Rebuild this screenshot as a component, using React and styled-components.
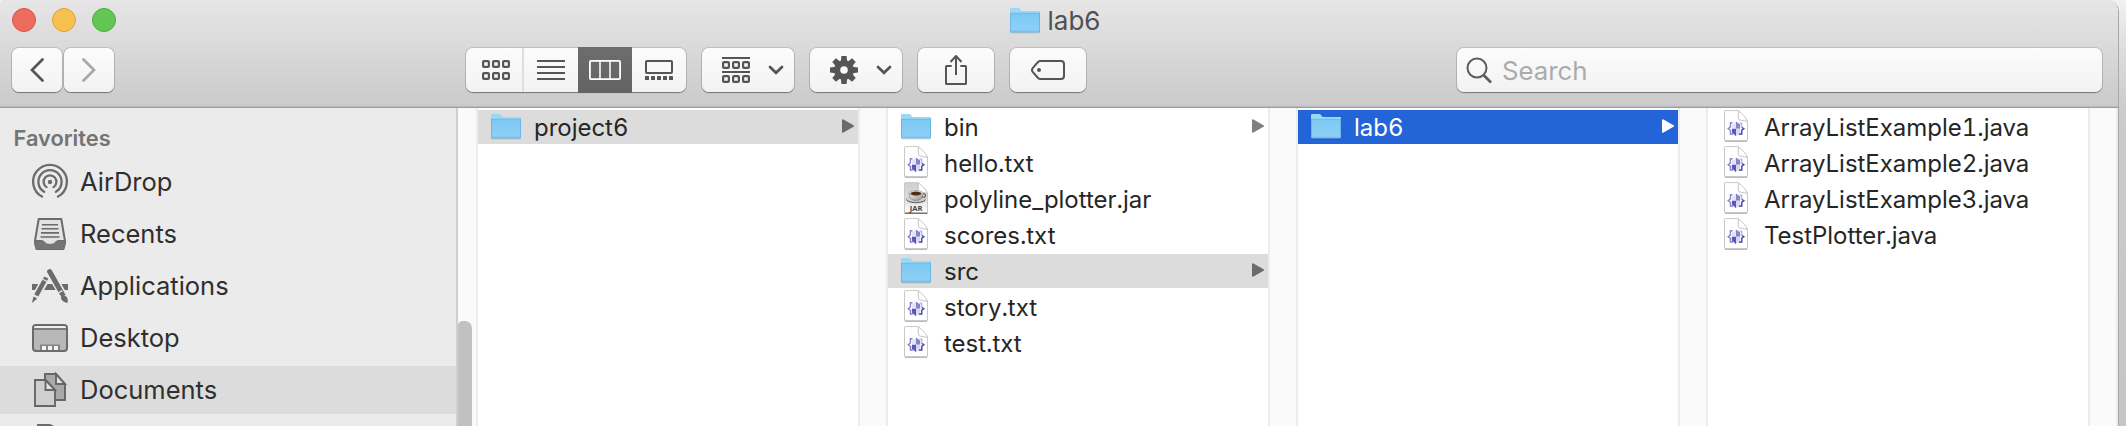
import React from "react";
import styled, { createGlobalStyle, css } from "styled-components";

const GlobalStyle = createGlobalStyle`
  * { box-sizing: border-box; }
  body {
    margin: 0;
    background: #fff;
    font-family: Inter, "Liberation Sans", sans-serif;
    overflow: hidden;
  }
  svg { display: block; flex: none; }
`;

const Backdrop = styled.div`
  width: 2126px;
  height: 426px;
  overflow: hidden;
  background: linear-gradient(#f2f2f2, #e0e0e0 40px, #cbcbcb 110px, #c6c6c6);
`;

const Window = styled.div`
  width: 2119px;
  height: 426px;
  display: flex;
  flex-direction: column;
  border-right: 1px solid #a9a9a9;
  border-radius: 4px 12px 0 0;
  overflow: hidden;
  background: #fff;
`;

const Header = styled.header`
  flex: none;
  height: 108px;
  background: linear-gradient(#e6e6e6, #cacaca);
  border-bottom: 1px solid #9c9c9c;
  box-shadow: inset 0 -1px 0 #bcbcbc;
`;

const TitleBar = styled.div`
  display: grid;
  grid-template-columns: 1fr auto 1fr;
  align-items: center;
  height: 40px;
  padding: 0 20px 0 12px;
`;

const Lights = styled.div`
  display: flex;
  gap: 16px;
`;

const Light = styled.span`
  width: 24px;
  height: 24px;
  border-radius: 50%;
  background: ${(p) => p.$fill};
  border: 1px solid ${(p) => p.$edge};
`;

const Title = styled.div`
  display: flex;
  align-items: center;
  gap: 8px;
  padding-top: 2px;
  color: #505050;
  font-size: 26px;
  line-height: 38px;
  height: 40px;
`;

const Toolbar = styled.div`
  display: flex;
  align-items: flex-start;
  padding: 8px 16px 0 12px;
`;

const raised = css`
  height: 44px;
  border-radius: 7px;
  background: linear-gradient(#fcfcfc, #f2f2f2);
  box-shadow: 0 0 0 1px rgba(0, 0, 0, 0.13), 0 1px 1px rgba(0, 0, 0, 0.35);
`;

const Button = styled.button`
  ${raised}
  display: flex;
  align-items: center;
  justify-content: ${(p) => (p.$menu ? "flex-start" : "center")};
  width: ${(p) => p.$w}px;
  margin: 0 0 0 ${(p) => p.$gap || 0}px;
  padding: 0 0 0 ${(p) => (p.$menu ? 20 : 0)}px;
  border: 0;
`;

const Segments = styled.div`
  ${raised}
  display: flex;
  width: 220px;
  margin-left: 352px;
`;

const Segment = styled.div`
  display: flex;
  align-items: center;
  justify-content: center;
  width: ${(p) => p.$w}px;
  padding-left: ${(p) => p.$pad || 0}px;
  border-right: ${(p) => (p.$divided ? "2px solid #dedede" : "0")};
  ${(p) =>
    p.$active &&
    css`
      height: 46px;
      margin-top: -1px;
      background: linear-gradient(#6d6d6d, #636363);
    `}
`;

const SearchField = styled.div`
  ${raised}
  display: flex;
  align-items: center;
  width: 645px;
  margin-left: auto;
  padding-left: 9px;
  gap: 9px;
  color: #ababab;
  font-size: 25.8px;
`;

const Body = styled.div`
  flex: 1;
  display: flex;
  min-height: 0;
`;

const Sidebar = styled.nav`
  flex: none;
  width: 458px;
  border-right: 2px solid #cfcfcf;
  background: #ebebeb;
  overflow: hidden;
`;

const SidebarHeading = styled.h2`
  margin: 0;
  height: 50px;
  padding: 12px 0 0 13.5px;
  color: #747474;
  font-size: 21.8px;
  font-weight: 600;
  line-height: 36px;
`;

const Place = styled.div`
  display: flex;
  align-items: center;
  gap: 10px;
  height: 48px;
  margin-bottom: 4px;
  padding-left: 30px;
  color: #2f2f2f;
  background: ${(p) => (p.$active ? "#dcdcdc" : "transparent")};
`;

const PlaceName = styled.span`
  font-size: 25.5px;
  line-height: 48px;
`;

const Gutter = styled.div`
  flex: none;
  width: ${(p) => p.$w || 26}px;
  background: #fafafa;
`;

const Thumb = styled.div`
  width: 14px;
  height: 130px;
  margin-top: 213px;
  border-radius: 5px 7px 0 0;
  background: #c1c1c1;
`;

const Column = styled.section`
  flex: none;
  width: 384px;
  padding-top: 2px;
  border: solid #ececec;
  border-width: 0 2px;
  background: #fff;
`;

const NextColumn = styled.div`
  width: 2px;
  background: #ececec;
`;

const rowColors = {
  plain: ["transparent", "#262626", "#808080"],
  path: ["#dcdcdc", "#262626", "#6b6b6b"],
  selected: ["#2464d9", "#fff", "#fff"],
};

const Row = styled.div`
  display: flex;
  align-items: center;
  height: 34px;
  margin-bottom: 2px;
  padding: 0 4px 0 13px;
  background: ${(p) => rowColors[p.$tone][0]};
  color: ${(p) => rowColors[p.$tone][1]};
`;

const FileName = styled.span`
  flex: 1;
  padding: 1px 0 0 13px;
  font-size: 24px;
  line-height: 34px;
  letter-spacing: -0.03px;
  font-variant-numeric: tabular-nums;
  white-space: nowrap;
`;

const INK = "#555";
const SIDE = "#6b6b6b";

const FolderIcon = () => (
  <svg width="30" height="34" viewBox="0 0 30 34">
    <defs>
      <linearGradient id="folder" x1="0" y1="0" x2="0" y2="1">
        <stop offset="0" stopColor="#7cc8f3" />
        <stop offset="1" stopColor="#90d2f8" />
      </linearGradient>
    </defs>
    <path d="M0.5 28.8h29" stroke="#000" strokeOpacity=".2" />
    <path d="M0 5.2Q0 4 1.2 4H8.5Q9.3 4 10 5L11.5 7H29Q30 7 30 8V27H0Z" fill="#9bd7f7" />
    <path d="M0 9.3H30V27Q30 28.3 28.8 28.3H1.2Q0 28.3 0 27Z" fill="url(#folder)" />
    <path d="M0 9.3H30" stroke="#6cb9e4" strokeWidth=".9" />
    <path d="M.4 9V27.9H29.6V9" fill="none" stroke="#60afdc" strokeWidth=".8" />
    <path d="M1 26.4H29" stroke="#7dc3ec" strokeWidth=".6" />
  </svg>
);

const Page = ({ fill }) => (
  <>
    <path d="M4 31.3H26" stroke="#aaa" strokeWidth="1" />
    <path d="M3.5 1.2Q3.5.6 4.2.6H17L26.5 11V30.5H3.5Z" fill={fill} stroke="#c9c9c9" strokeWidth="1" />
    <path d="M17.3.8V8.2Q17.3 9.8 19 10L26.4 11.4Q25 6.5 17.3.8Z" fill="#fff" stroke="#c0c0c0" strokeWidth=".9" />
  </>
);

const CodeIcon = () => (
  <svg width="30" height="34" viewBox="0 0 30 34">
    <Page fill="#fff" />
    <path d="M11.5 12.7H9.4V17L7.2 18.7 9.4 20.3V24H12" fill="none" stroke="#8583cc" strokeWidth="1.4" />
    <path d="M18.5 13.1H20.7V17L22.8 18.7 20.7 20.3V24H17.8" fill="none" stroke="#b9b7e3" strokeWidth="1.4" />
    <path d="M20.9 17.5L22.8 18.7 20.7 20.3V24H17.8" fill="none" stroke="#4f4cab" strokeWidth="1.4" />
    <path d="M15 11.5L19.2 14.5V18.7H15Z" fill="#8784cf" />
    <path d="M15 11.5V18.7H10.9V14.5Z" fill="#e4e4f5" />
    <path d="M10.9 18.7H15V26.3L10.9 22.5Z" fill="#5a57b6" />
    <path d="M15 18.7H19.2V22.6L15 26.3Z" fill="#d8d7f1" />
  </svg>
);

const JarIcon = () => (
  <svg width="30" height="34" viewBox="0 0 30 34">
    <defs>
      <linearGradient id="jarPage" x1="0" y1="0" x2="0" y2="1">
        <stop offset="0" stopColor="#cfcfcf" />
        <stop offset=".55" stopColor="#dedede" />
        <stop offset="1" stopColor="#fff" />
      </linearGradient>
      <linearGradient id="cup" x1="0" y1="0" x2="1" y2="1">
        <stop offset="0" stopColor="#fafafa" />
        <stop offset="1" stopColor="#8c8c8c" />
      </linearGradient>
    </defs>
    <Page fill="url(#jarPage)" />
    <path d="M3.5 31.3H26.5" stroke="#666" strokeWidth="1" />
    <ellipse cx="15" cy="17.6" rx="9.8" ry="3.6" fill="#6c6c6c" />
    <ellipse cx="15" cy="16.8" rx="9.5" ry="3.1" fill="#cfcfcf" />
    <ellipse cx="22.3" cy="13.4" rx="2.2" ry="1.8" fill="none" stroke="#6a6a6a" strokeWidth="1.3" />
    <path d="M8 11.3Q8.3 18.4 15 18.5T22 11.3Z" fill="url(#cup)" stroke="#777" strokeWidth=".6" />
    <ellipse cx="15" cy="11.2" rx="7" ry="2.6" fill="#f1f1f1" stroke="#888" strokeWidth=".6" />
    <ellipse cx="15" cy="11.5" rx="5.6" ry="1.9" fill="#4f2e16" />
    <text x="15.2" y="29" textAnchor="middle" fontFamily="Open Sans, sans-serif" fontSize="7.6" fontWeight="700" fill="#444">
      JAR
    </text>
  </svg>
);

const rowIcons = { folder: FolderIcon, code: CodeIcon, jar: JarIcon };

const Disclosure = ({ color }) => (
  <svg width="12" height="34" viewBox="0 0 12 34">
    <path d="M1 10.3L11 16 1 21.7Z" fill={color} stroke={color} strokeWidth="2" strokeLinejoin="round" />
  </svg>
);

const Arrow = ({ color, flip }) => (
  <svg width="14" height="26" viewBox="0 0 14 26" fill="none" stroke={color} strokeWidth="2.7" strokeLinecap="round">
    <path d={flip ? "M1.5 2.5L12 13 1.5 23.5" : "M12.5 2.5L2 13 12.5 23.5"} />
  </svg>
);

const MenuMark = styled.svg`
  margin-left: 18px;
`;

const Chevron = () => (
  <MenuMark width="16" height="10" viewBox="0 0 16 10" fill="none" stroke={INK} strokeWidth="2.7" strokeLinecap="round">
    <path d="M2 2L8 7.8 14 2" />
  </MenuMark>
);

const Tiles = ({ y }) => [0, 10, 20].map((x) => <rect key={x} x={x + 1.1} y={y + 1.1} width="5.8" height="5.8" rx="1" />);

const GridIcon = () => (
  <svg width="28" height="20" viewBox="0 0 28 20" fill="none" stroke={INK} strokeWidth="2.2">
    <Tiles y={0} />
    <Tiles y={12} />
  </svg>
);

const ListIcon = () => (
  <svg width="28" height="20" viewBox="0 0 28 20" stroke={INK} strokeWidth="2">
    <path d="M0 1H28M0 7H28M0 13H28M0 19H28" />
  </svg>
);

const ColumnsIcon = () => (
  <svg width="32" height="20" viewBox="0 0 32 20" fill="none" stroke="#fff" strokeWidth="1.8">
    <rect x=".9" y=".9" width="30.2" height="18.2" rx="1" />
    <path d="M11 1V19M21 1V19" strokeWidth="1.5" />
  </svg>
);

const GalleryIcon = () => (
  <svg width="28" height="20" viewBox="0 0 28 20">
    <rect x="1" y="1" width="26" height="12" rx="1" fill="none" stroke={INK} strokeWidth="2" />
    {[0, 6, 12, 18, 24].map((x) => (
      <rect key={x} x={x} y="16" width="4" height="4" rx=".6" fill={INK} />
    ))}
  </svg>
);

const ArrangeIcon = () => (
  <svg width="28" height="26" viewBox="0 0 28 26" fill="none" stroke={INK} strokeWidth="2.2">
    <path d="M0 1H28M0 15H28" strokeWidth="2" />
    <Tiles y={4} />
    <Tiles y={18} />
  </svg>
);

const GearIcon = () => (
  <svg width="28" height="28" viewBox="-14 -14 28 28">
    {[0, 45, 90, 135].map((a) => (
      <path key={a} d="M-2.6 -14H2.6L3.2 -8V8L2.6 14H-2.6L-3.2 8V-8Z" transform={`rotate(${a})`} fill={INK} />
    ))}
    <circle r="10" fill={INK} />
    <circle r="3.8" fill="#f8f8f8" />
  </svg>
);

const ShareIcon = () => (
  <svg width="24" height="32" viewBox="0 0 24 32" fill="none" stroke={INK} strokeWidth="2" strokeLinejoin="round">
    <path d="M7.7 12H2.6Q2 12 2 12.6V29.4Q2 30 2.6 30H21.4Q22 30 22 29.4V12.6Q22 12 21.4 12H16.3" />
    <path d="M12 21V2M6.5 8L12 2 17.5 8" />
  </svg>
);

const TagIcon = () => (
  <svg width="34" height="20" viewBox="0 0 34 20" fill="none" stroke={INK} strokeWidth="2">
    <path d="M9.5 1H30Q33 1 33 4V16Q33 19 30 19H9.5Q8 19 7 18L1.7 11.8Q.3 10 1.7 8.2L7 2Q8 1 9.5 1Z" />
    <circle cx="8" cy="10" r="2" fill={INK} stroke="none" />
  </svg>
);

const SearchIcon = () => (
  <svg width="27" height="28" viewBox="0 0 27 28" fill="none" stroke="#5c5c5c" strokeWidth="2">
    <circle cx="11" cy="12" r="9.5" />
    <path d="M17.5 19L25 26.5" strokeWidth="2.6" />
  </svg>
);

const PlaceSvg = (props) => <svg width="40" height="48" viewBox="0 0 40 48" fill="none" stroke={SIDE} strokeWidth="2" {...props} />;

const AirDropIcon = () => (
  <PlaceSvg strokeWidth="2.3" strokeLinecap="round">
    <path d="M12 38.6A16.9 16.9 0 1 1 28 38.6" />
    <path d="M14.1 33.8A11.6 11.6 0 1 1 25.9 33.8" />
    <path d="M16.5 29.1A6.4 6.4 0 1 1 23.5 29.1" />
    <circle cx="20" cy="24" r="2.2" fill={SIDE} stroke="none" />
  </PlaceSvg>
);

const RecentsIcon = () => (
  <PlaceSvg>
    <path d="M8.7 9H31.3L35 31V33L33.5 39H6.5L5 33V31Z" fill="#e3e3e3" strokeLinejoin="round" />
    <path d="M5 30.5H11.5Q13.5 30.5 14.5 32.2 16 34.5 20 34.5T25.5 32.2Q26.5 30.5 28.5 30.5H35V33L33.5 39H6.5L5 33Z" fill="#757575" stroke="none" />
    <path d="M5 30.5H11.5Q13.5 30.5 14.5 32.2 16 34.5 20 34.5T25.5 32.2Q26.5 30.5 28.5 30.5H35" strokeWidth="1" />
    <path d="M12 14.8H28M11.5 18.8H28.5M11 22.9H29M10.5 27H29.5" strokeWidth="1.6" />
  </PlaceSvg>
);

const ApplicationsIcon = () => (
  <PlaceSvg>
    <path d="M2 25H38" strokeWidth="6" />
    <path d="M19.7 9.5L3 40M19.7 9.5L37 40" stroke="#ebebeb" strokeWidth="8" />
    <path d="M16.3 15.5L6.3 33.5" strokeWidth="4.6" />
    <path d="M19.6 9.6L31.3 30.2" strokeWidth="5" strokeLinecap="round" />
    <path d="M12.8 17.2L18.8 20.5" stroke="#ebebeb" strokeWidth="1.3" />
    <path d="M31.6 30.7L33.6 34.2" strokeWidth="4.6" />
    <path d="M27.3 31.5L32.4 28.6" stroke="#ebebeb" strokeWidth="1.3" />
    <path d="M3.5 34.5L7.2 36.5 2.6 40.6H2Z" fill={SIDE} stroke="none" />
    <path d="M30.7 35.5Q33 32.5 36.3 34.5 38.5 37 37.5 41 32 40 30.7 35.5Z" fill={SIDE} stroke="none" />
  </PlaceSvg>
);

const DesktopIcon = () => (
  <PlaceSvg>
    <rect x="3" y="11" width="34" height="26" rx="3" fill="#b8b8b8" />
    <path d="M4 14Q4 12 6 12H34Q36 12 36 14V14.3H4Z" fill="#eee" stroke="none" />
    <path d="M4 15H36" strokeWidth="1.6" />
    <rect x="10" y="30.5" width="20" height="5.5" fill="#858585" stroke="none" />
    {[12, 18, 24].map((x) => (
      <rect key={x} x={x} y="32" width="4" height="4" fill="#f4f4f4" stroke="none" />
    ))}
  </PlaceSvg>
);

const DocumentsIcon = () => (
  <PlaceSvg stroke="#666" strokeWidth="1.9">
    <path d="M15 8H26L35 18V34H15Z" fill="#a9a9a9" />
    <path d="M26 8V18H35Z" fill="#e2e2e2" />
    <path d="M5 14H15.5L25 24V40H5Z" fill="#cfcfcd" />
    <path d="M15.5 14V24H25Z" fill="#e2e2e2" />
  </PlaceSvg>
);

const DownloadsIcon = () => (
  <PlaceSvg>
    <path d="M8 40V7H19Q23 7 25 12V40Z" fill="#cfcfcf" />
  </PlaceSvg>
);

const places = [
  ["AirDrop", AirDropIcon],
  ["Recents", RecentsIcon],
  ["Applications", ApplicationsIcon],
  ["Desktop", DesktopIcon],
  ["Documents", DocumentsIcon],
  ["", DownloadsIcon],
];

const columns = [
  [["project6", "folder", "path"]],
  [
    ["bin", "folder"],
    ["hello.txt", "code"],
    ["polyline_plotter.jar", "jar"],
    ["scores.txt", "code"],
    ["src", "folder", "path"],
    ["story.txt", "code"],
    ["test.txt", "code"],
  ],
  [["lab6", "folder", "selected"]],
  [
    ["ArrayListExample1.java", "code"],
    ["ArrayListExample2.java", "code"],
    ["ArrayListExample3.java", "code"],
    ["TestPlotter.java", "code"],
  ],
];

const FileRow = ({ name, kind, tone = "plain" }) => {
  const Icon = rowIcons[kind];
  return (
    <Row $tone={tone}>
      <Icon />
      <FileName>{name}</FileName>
      {kind === "folder" && <Disclosure color={rowColors[tone][2]} />}
    </Row>
  );
};

export default function App() {
  return (
    <Backdrop>
      <GlobalStyle />
      <Window>
        <Header>
          <TitleBar>
            <Lights>
              <Light $fill="#ee6b60" $edge="#d9544a" />
              <Light $fill="#f6c14f" $edge="#dba23c" />
              <Light $fill="#62c655" $edge="#4dab40" />
            </Lights>
            <Title>
              <FolderIcon />
              lab6
            </Title>
          </TitleBar>
          <Toolbar>
            <Button $w={50}><Arrow color="#555" /></Button>
            <Button $w={50} $gap={2}><Arrow color="#a8a8a8" flip /></Button>
            <Segments>
              <Segment $w={58} $pad={4} $divided><GridIcon /></Segment>
              <Segment $w={54}><ListIcon /></Segment>
              <Segment $w={54} $active><ColumnsIcon /></Segment>
              <Segment $w={54}><GalleryIcon /></Segment>
            </Segments>
            <Button $w={92} $gap={16} $menu><ArrangeIcon /><Chevron /></Button>
            <Button $w={92} $gap={16} $menu><GearIcon /><Chevron /></Button>
            <Button $w={76} $gap={16}><ShareIcon /></Button>
            <Button $w={76} $gap={16}><TagIcon /></Button>
            <SearchField><SearchIcon />Search</SearchField>
          </Toolbar>
        </Header>
        <Body>
          <Sidebar>
            <SidebarHeading>Favorites</SidebarHeading>
            {places.map(([name, Icon]) => (
              <Place key={name} $active={name === "Documents"}>
                <Icon />
                <PlaceName>{name}</PlaceName>
              </Place>
            ))}
          </Sidebar>
          <Gutter $w={18}><Thumb /></Gutter>
          {columns.map((rows, i) => (
            <React.Fragment key={i}>
              <Column>
                {rows.map(([name, kind, tone]) => (
                  <FileRow key={name} name={name} kind={kind} tone={tone} />
                ))}
              </Column>
              <Gutter />
            </React.Fragment>
          ))}
          <NextColumn />
        </Body>
      </Window>
    </Backdrop>
  );
}
